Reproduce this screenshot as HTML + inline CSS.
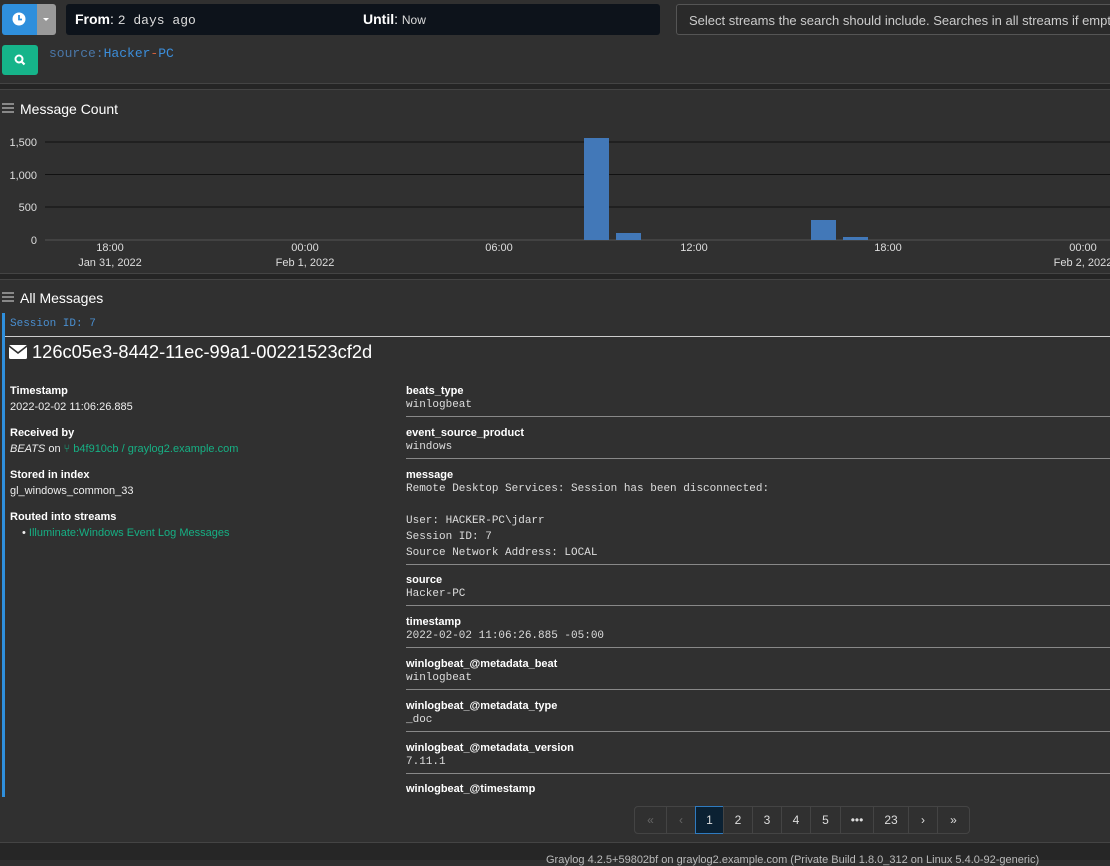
<!DOCTYPE html>
<html><head><style>
*{box-sizing:border-box;margin:0;padding:0}
body{width:1110px;height:860px;overflow:hidden;background:#303030;font-family:"Liberation Sans",sans-serif;color:#fff;position:relative;font-size:12px}
.abs{position:absolute}
.mono{font-family:"Liberation Mono",monospace}
.hdr{font-size:14px;color:#fff}
.k{font-weight:bold;font-size:11px;color:#fff}
.v{font-size:11px;color:#eee}
.mv{font-family:"Liberation Mono",monospace;font-size:11px;color:#ddd;line-height:16px}
.fld{position:absolute;left:406px;right:0;border-bottom:1px solid #888;padding-bottom:3px}
.g{color:#16b084}
.pg{position:absolute;top:806px;height:28px;border:1px solid #444;color:#ddd;font-size:12px;text-align:center;line-height:26px}
</style></head><body>
<div class="abs" style="left:2px;top:4px;width:35px;height:31px;background:#2f8fdc;border-radius:3px 0 0 3px"></div>
<svg class="abs" style="left:12px;top:12px" width="14" height="14"><circle cx="7" cy="7" r="6.5" fill="#fff"/><path d="M7 3v4.5h3" stroke="#2f8fdc" stroke-width="1.8" fill="none"/></svg>
<div class="abs" style="left:37px;top:4px;width:19px;height:31px;background:#9a9a9a;border-radius:0 3px 3px 0"></div>
<div class="abs" style="left:43px;top:18px;border:3px solid transparent;border-top:3px solid #fff"></div>
<div class="abs" style="left:66px;top:4px;width:594px;height:31px;background:#0d131b;border-radius:3px"></div>
<div class="abs" style="left:75px;top:11px;font-size:14px"><b>From</b>: <span class="mono" style="font-size:13px;color:#ddd">2 days ago</span></div>
<div class="abs" style="left:363px;top:11px;font-size:14px"><b>Until</b>: <span style="font-size:12px;color:#ddd">Now</span></div>
<div class="abs" style="left:676px;top:4px;width:450px;height:31px;border:1px solid #555;border-radius:3px;background:#2a2a2a;color:#ccc;font-size:13px;padding:8px 12px;white-space:nowrap">Select streams the search should include. Searches in all streams if empty.</div>
<div class="abs" style="left:2px;top:45px;width:36px;height:30px;background:#16b48a;border-radius:3px"></div>
<svg class="abs" style="left:14px;top:54px" width="12" height="12"><circle cx="5" cy="5" r="3.5" stroke="#fff" stroke-width="2" fill="none"/><path d="M7.5 7.5l3 3" stroke="#fff" stroke-width="2.2"/></svg>
<div class="abs mono" style="left:49px;top:46px;font-size:13px;color:#4a77a8">source:<span style="color:#3b8edb">Hacker</span><span style="color:#d0603a">-</span><span style="color:#3b8edb">PC</span></div>
<div class="abs" style="left:0;top:83px;width:1110px;height:7px;background:#252525;border-top:1px solid #444;border-bottom:1px solid #444"></div>
<div class="abs" style="left:2px;top:103px;width:12px;height:10px;border-top:2px solid #888;border-bottom:2px solid #888"><div style="margin-top:2px;border-top:2px solid #888"></div></div>
<div class="abs hdr" style="left:20px;top:101px">Message Count</div>
<svg class="abs" style="left:0;top:125px" width="1110" height="148" font-family="Liberation Sans" font-size="11" fill="#ddd">
<g stroke="#111" stroke-width="1"><line x1="45" y1="17" x2="1110" y2="17"/><line x1="45" y1="49.5" x2="1110" y2="49.5"/><line x1="45" y1="82" x2="1110" y2="82"/></g>
<line x1="45" y1="115" x2="1110" y2="115" stroke="#555"/>
<g text-anchor="end"><text x="37" y="21">1,500</text><text x="37" y="54">1,000</text><text x="37" y="86">500</text><text x="37" y="119">0</text></g>
<g fill="#4278b8"><rect x="584" y="13" width="25" height="102"/><rect x="616" y="108" width="25" height="7"/><rect x="811" y="95" width="25" height="20"/><rect x="843" y="112" width="25" height="3"/></g>
<g text-anchor="middle"><text x="110" y="126">18:00</text><text x="110" y="141">Jan 31, 2022</text><text x="305" y="126">00:00</text><text x="305" y="141">Feb 1, 2022</text><text x="499" y="126">06:00</text><text x="694" y="126">12:00</text><text x="888" y="126">18:00</text><text x="1083" y="126">00:00</text><text x="1083" y="141">Feb 2, 2022</text></g>
</svg>
<div class="abs" style="left:0;top:273px;width:1110px;height:7px;background:#252525;border-top:1px solid #444;border-bottom:1px solid #444"></div>
<div class="abs" style="left:2px;top:292px;width:12px;height:10px;border-top:2px solid #888;border-bottom:2px solid #888"><div style="margin-top:2px;border-top:2px solid #888"></div></div>
<div class="abs hdr" style="left:20px;top:290px">All Messages</div>
<div class="abs" style="left:2px;top:313px;width:3px;height:484px;background:#2f8fdc"></div>
<div class="abs mono" style="left:10px;top:318px;font-size:11px;color:#4a8fd0">Session ID: 7</div>
<div class="abs" style="left:5px;top:336px;width:1105px;border-top:1px solid #ccc"></div>
<svg class="abs" style="left:9px;top:345px" width="18" height="14"><rect x="0" y="0" width="18" height="14" rx="1.5" fill="#fff"/><path d="M0 1l9 7 9-7" stroke="#303030" stroke-width="1.6" fill="none"/></svg>
<div class="abs" style="left:32px;top:341px;font-size:18.3px">126c05e3-8442-11ec-99a1-00221523cf2d</div>
<div class="abs" style="left:10px;top:383px;line-height:16px">
<div class="k">Timestamp</div><div class="v" style="margin-bottom:10px">2022-02-02 11:06:26.885</div>
<div class="k">Received by</div><div class="v" style="margin-bottom:10px"><i>BEATS</i> on <span class="g">⑂ b4f910cb / graylog2.example.com</span></div>
<div class="k">Stored in index</div><div class="v" style="margin-bottom:10px">gl_windows_common_33</div>
<div class="k">Routed into streams</div><div class="v" style="padding-left:12px">• <span class="g">Illuminate:Windows Event Log Messages</span></div>
</div>
<div class="fld" style="top:385px"><div class="k">beats_type</div><div class="mv">winlogbeat</div></div>
<div class="fld" style="top:427px"><div class="k">event_source_product</div><div class="mv">windows</div></div>
<div class="fld" style="top:469px"><div class="k">message</div><div class="mv">Remote Desktop Services: Session has been disconnected:<br><br>User: HACKER-PC\jdarr<br>Session ID: 7<br>Source Network Address: LOCAL</div></div>
<div class="fld" style="top:574px"><div class="k">source</div><div class="mv">Hacker-PC</div></div>
<div class="fld" style="top:616px"><div class="k">timestamp</div><div class="mv">2022-02-02 11:06:26.885 -05:00</div></div>
<div class="fld" style="top:658px"><div class="k">winlogbeat_@metadata_beat</div><div class="mv">winlogbeat</div></div>
<div class="fld" style="top:700px"><div class="k">winlogbeat_@metadata_type</div><div class="mv">_doc</div></div>
<div class="fld" style="top:742px"><div class="k">winlogbeat_@metadata_version</div><div class="mv">7.11.1</div></div>
<div class="abs k" style="left:406px;top:783px">winlogbeat_@timestamp</div>
<div class="pg" style="left:634px;width:33px;color:#666;border-radius:4px 0 0 4px">«</div>
<div class="pg" style="left:666px;width:30px;color:#666">‹</div>
<div class="pg" style="left:695px;width:29px;background:#0b2133;border-color:#2f7bc0">1</div>
<div class="pg" style="left:723px;width:30px">2</div>
<div class="pg" style="left:752px;width:30px">3</div>
<div class="pg" style="left:781px;width:30px">4</div>
<div class="pg" style="left:810px;width:31px">5</div>
<div class="pg" style="left:840px;width:34px">•••</div>
<div class="pg" style="left:873px;width:36px">23</div>
<div class="pg" style="left:908px;width:30px">›</div>
<div class="pg" style="left:937px;width:33px;border-radius:0 4px 4px 0">»</div>
<div class="abs" style="left:0;top:842px;width:1110px;height:18px;background:#262626;border-top:1px solid #444"></div>
<div class="abs" style="left:546px;top:854px;font-size:11px;color:#bbb;white-space:nowrap">Graylog 4.2.5+59802bf on graylog2.example.com (Private Build 1.8.0_312 on Linux 5.4.0-92-generic)</div>
</body></html>
